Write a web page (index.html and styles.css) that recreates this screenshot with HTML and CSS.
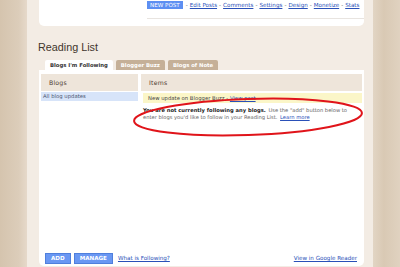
FILE: index.html
```html
<!DOCTYPE html>
<html lang="en">
<head>
    <meta charset="UTF-8">
    <title>Reading List</title>
    <link rel="stylesheet" href="styles.css">
</head>
<body>
    <div class="page">
        <div class="side side-left"></div>
        <div class="main">
            <div class="post-card">
                <div class="toolbar">
                    <span class="btn-new">NEW POST</span>
                    <span class="sep">-</span> <a href="#">Edit Posts</a>
                    <span class="sep">-</span> <a href="#">Comments</a>
                    <span class="sep">-</span> <a href="#">Settings</a>
                    <span class="sep">-</span> <a href="#">Design</a>
                    <span class="sep">-</span> <a href="#">Monetize</a>
                    <span class="sep">-</span> <a href="#">Stats</a>
                </div>
                <div class="toolbar-line"></div>
            </div>

            <h2 class="title">Reading List</h2>

            <div class="tabs">
                <span class="tab active">Blogs I'm Following</span>
                <span class="tab">Blogger Buzz</span>
                <span class="tab">Blogs of Note</span>
            </div>

            <div class="panel">
                <div class="columns">
                    <div class="col-blogs">
                        <div class="col-head">Blogs</div>
                        <div class="blog-row">All blog updates</div>
                    </div>
                    <div class="col-items">
                        <div class="col-head">Items</div>
                        <div class="update-row">New update on Blogger Buzz - <a href="#">View post</a></div>
                        <p class="message"><b>You are not currently following any blogs.</b> Use the "add" button below to enter blogs you'd like to follow in your Reading List. <a href="#">Learn more</a></p>
                    </div>
                </div>

                <div class="actions">
                    <span class="btn">ADD</span>
                    <span class="btn">MANAGE</span>
                    <a href="#" class="what">What is Following?</a>
                    <a href="#" class="reader">View in Google Reader</a>
                </div>

                <svg class="circle" width="240" height="48" viewBox="0 0 240 48">
                    <ellipse cx="120" cy="24" rx="114" ry="18" fill="none" stroke="#e0141a" stroke-width="2" transform="rotate(-2 120 24)"/>
                </svg>
            </div>
        </div>
        <div class="side side-right"></div>
    </div>
</body>
</html>
```

FILE: styles.css
```css
/* Blogger dashboard - reading list */
body {
    margin: 0;
    font-family: "DejaVu Sans", Verdana, sans-serif;
    font-size: 5.3px;
    color: #333;
}
a {
    color: #2a50b8;
}
.page {
    display: flex;
    height: 267px;
    overflow: hidden;
}
.side {
    width: 27px;
    flex: none;
}
.side-left {
    background: linear-gradient(to right, #d5c4ae, #dccdba 70%, #e6d9ca);
}
.side-right {
    background: linear-gradient(to right, #e2d5c4, #d9c9b4 40%, #e0d2c0);
}
.main {
    flex: 1;
    background: #f3ece4;
    padding: 0 9px 0 12px;
}
.post-card {
    background: #fff;
    height: 26px;
    border-radius: 0 0 5px 5px;
    box-sizing: border-box;
    padding: 1px 0 0 108px;
}
.toolbar {
    display: flex;
    align-items: center;
    gap: 2px;
    height: 8px;
    white-space: nowrap;
    font-size: 5.6px;
}
.btn-new {
    background: #5d8ff2;
    color: #fff;
    padding: 0 3px;
    height: 8px;
    line-height: 8px;
    margin-right: 1px;
}
.sep {
    color: #666;
}
.toolbar-line {
    height: 1px;
    background: #e8e4e0;
    margin-top: 9px;
}
.title {
    font-family: "Liberation Sans", Arial, sans-serif;
    font-weight: normal;
    font-size: 10.8px;
    color: #3f352c;
    margin: 14px 0 0 -1px;
    height: 15px;
    line-height: 15px;
}
.tabs {
    display: flex;
    gap: 3px;
    padding-left: 6px;
    margin-top: 5px;
    height: 10px;
}
.tab {
    background: #c5b098;
    color: #fff;
    font-weight: bold;
    padding: 0 5px;
    line-height: 10px;
    border-radius: 2px 2px 0 0;
}
.tab.active {
    background: #fff;
    color: #333;
}
.panel {
    position: relative;
    background: #fff;
    height: 196px;
    border-radius: 0 0 5px 5px;
    box-sizing: border-box;
    padding: 4px 2px 0;
    display: flex;
    flex-direction: column;
}
.columns {
    display: flex;
    gap: 3px;
    flex: 1;
}
.col-blogs {
    width: 97px;
}
.col-items {
    flex: 1;
}
.col-head {
    background: #eee5da;
    height: 17px;
    line-height: 17px;
    font-size: 6.2px;
    color: #4e4034;
    padding-left: 8px;
    letter-spacing: 0.2px;
}
.blog-row {
    background: #d7e4f9;
    height: 9px;
    line-height: 9px;
    margin-top: 1px;
    padding-left: 2px;
    color: #4a5470;
}
.update-row {
    background: #fbf6c8;
    height: 10px;
    line-height: 10px;
    margin: 2px 0 0 2px;
    padding-left: 5px;
    color: #444;
}
.message {
    margin: 4px 0 0 2px;
    line-height: 7px;
    font-size: 5.2px;
    color: #666;
    padding-right: 12px;
}
.message b {
    color: #222;
    margin-right: 1px;
}
.message a {
    margin-left: 1px;
}
.actions {
    display: flex;
    align-items: center;
    gap: 3px;
    padding: 0 5px 0 4px;
    height: 10px;
    margin-bottom: 3px;
    font-size: 5.6px;
}
.btn {
    background: #6997f3;
    border: 1px solid #4f7fdc;
    color: #fff;
    font-weight: bold;
    height: 9px;
    line-height: 9px;
    padding: 0 5px;
}
.what {
    margin-left: 2px;
}
.reader {
    margin-left: auto;
}
.circle {
    position: absolute;
    left: 89px;
    top: 23px;
}
```
